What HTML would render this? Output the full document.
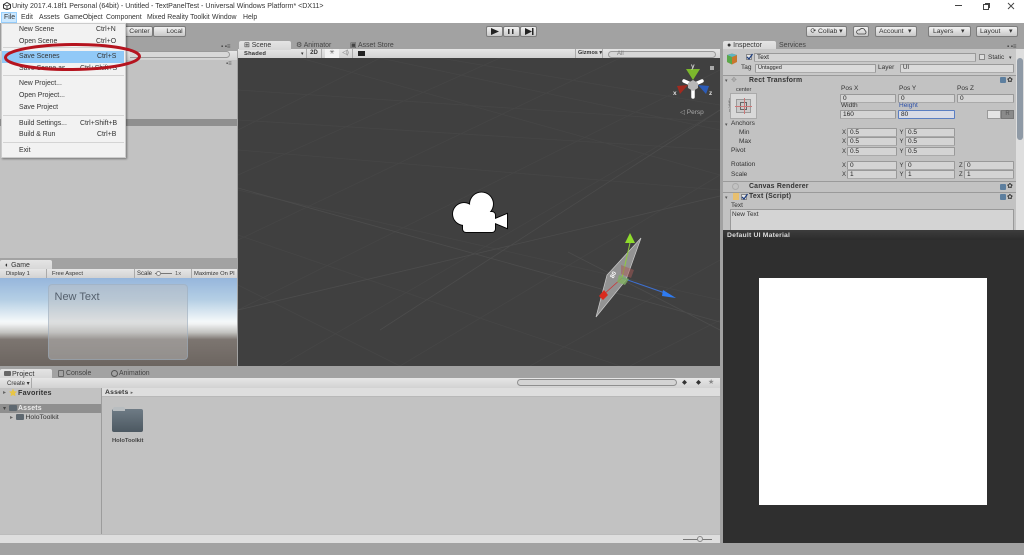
<!DOCTYPE html>
<html><head><meta charset="utf-8"><style>
html,body{margin:0;padding:0;width:1024px;height:555px;overflow:hidden;background:#a2a2a2}
#r{position:relative;width:1024px;height:555px;overflow:hidden;font-family:"Liberation Sans",sans-serif;font-size:6.9px;color:#333;filter:blur(.3px)}
#r div,#r span,#r svg{position:absolute;box-sizing:border-box}
.t{white-space:nowrap;line-height:10px;height:10px;margin-top:.7px}
.b{font-weight:bold;letter-spacing:.2px}
.f{background:#d4d4d4;border:1px solid #999;border-bottom-color:#aaa;border-radius:1px;line-height:7px;padding-left:2px;font-size:6.5px;color:#222;height:9px}
.btn{background:linear-gradient(#f2f2f2,#c8c8c8);border:1px solid #7c7c7c;border-radius:2px;height:11px;top:26px;line-height:9px;text-align:center;color:#333;font-size:6.8px;white-space:nowrap}
.tb{background:linear-gradient(#e6e6e6,#d2d2d2)}
.sep{background:#d4d4d4;height:1px;left:3px;width:121px}
.tab{background:linear-gradient(#e4e4e4,#d6d6d6);border-radius:2px 2px 0 0}
.ic{background:#5d7f9f;width:6px;height:6px;border-radius:1px}
</style></head><body><div id="r">
<!-- title / menu -->
<div style="left:0;top:0;width:1024px;height:23px;background:#fff"></div>
<svg style="left:3px;top:2px" width="8" height="8" viewBox="0 0 8 8"><path d="M4 .5 7.500 2.500V6L4 7.700.5 6V2.500Z" fill="none" stroke="#333" stroke-width="1"/><path d="M4 4V7.500M4 4 .8 2.500M4 4 7.200 2.500" stroke="#333" stroke-width=".8"/></svg>
<span class="t" style="left:12px;top:1px;color:#333;font-size:7.05px">Unity 2017.4.18f1 Personal (64bit) - Untitled - TextPanelTest - Universal Windows Platform* &lt;DX11&gt;</span>
<div style="left:955px;top:5px;width:7px;height:1px;background:#444"></div>
<div style="left:983px;top:4px;width:6px;height:6px;border:1px solid #444;background:#fff"></div>
<div style="left:985px;top:3px;width:5px;height:5px;border-top:1px solid #444;border-right:1px solid #444"></div>
<svg style="left:1007px;top:2px" width="8" height="8"><path d="M1 1 7 7M7 1 1 7" stroke="#444" stroke-width=".9"/></svg>
<div style="left:1px;top:12px;width:16px;height:11px;background:#cce8ff;border:1px solid #99d1ff"></div>
<span class="t" style="left:4px;top:12px">File</span>
<span class="t" style="left:21px;top:12px">Edit</span>
<span class="t" style="left:39px;top:12px">Assets</span>
<span class="t" style="left:64px;top:12px">GameObject</span>
<span class="t" style="left:106px;top:12px">Component</span>
<span class="t" style="left:147px;top:12px">Mixed Reality Toolkit</span>
<span class="t" style="left:212px;top:12px">Window</span>
<span class="t" style="left:243px;top:12px">Help</span>

<!-- toolbar -->
<div style="left:0;top:23px;width:1024px;height:532px;background:#a2a2a2"></div>
<div class="btn" style="left:112px;width:41px;padding-left:14px">Center</div>
<div class="btn" style="left:153px;width:33px;padding-left:10px">Local</div>
<div class="btn" style="left:486px;width:17px"></div><div class="btn" style="left:503px;width:17px"></div><div class="btn" style="left:520px;width:17px"></div>
<svg style="left:486px;top:26px" width="52" height="11"><path d="M5 2 13 5.500 5 9Z" fill="#222"/><path d="M22 3h1.500v5H22ZM26 3h1.500v5H26Z" fill="#333"/><path d="M39 2 46 5.500 39 9Z M46 2h1.500v7H46Z" fill="#222"/></svg>
<div class="btn" style="left:806px;width:41px">⟳ Collab ▾</div>
<div class="btn" style="left:853px;width:16px"></div>
<svg style="left:856px;top:28px" width="11" height="7"><path d="M2 6h7a2 2 0 0 0 0-3.500A3 3 0 0 0 3.500 2 2 2 0 0 0 2 6Z" fill="none" stroke="#444" stroke-width=".8"/></svg>
<div class="btn" style="left:875px;width:42px;text-align:left;padding-left:3px">Account<span style="left:32px;top:0">▾</span></div>
<div class="btn" style="left:928px;width:43px;text-align:left;padding-left:4px">Layers<span style="left:32px;top:0">▾</span></div>
<div class="btn" style="left:976px;width:42px;text-align:left;padding-left:3px">Layout<span style="left:32px;top:0">▾</span></div>

<!-- Hierarchy -->
<div class="tb" style="left:0;top:51px;width:237px;height:9px"></div>
<div style="left:130px;top:51px;width:100px;height:7px;border:1px solid #999;border-left:0;border-radius:0 4px 4px 0;background:#d8d8d8"></div>
<div style="left:0;top:60px;width:237px;height:198px;background:#c2c2c2"></div>
<div style="left:0;top:119px;width:237px;height:7px;background:#8f8f8f"></div>
<span class="t" style="left:226px;top:58px;font-size:6px;color:#555">▪≡</span>
<span class="t" style="left:221px;top:41px;font-size:6px;color:#444">▪ ▪≡</span>

<!-- Scene -->
<div class="tb" style="left:238px;top:49px;width:482px;height:9px"></div>
<div class="tab" style="left:239px;top:41px;width:52px;height:9px"></div>
<span class="t" style="left:244px;top:40.500px">⊞ Scene</span>
<span class="t" style="left:296px;top:40.500px;color:#444">⚙ Animator</span>
<span class="t" style="left:350px;top:40.500px;color:#444">▣ Asset Store</span>
<span class="t b" style="left:244px;top:48.500px;font-size:5.800px">Shaded</span>
<span class="t" style="left:301px;top:48.500px;font-size:5px">▾</span>
<div style="left:306px;top:49px;width:16px;height:9px;text-align:center;line-height:9px;font-size:6px;font-weight:bold;border-left:1px solid #aaa;border-right:1px solid #aaa">2D</div>
<div style="left:325px;top:49px;width:14px;height:9px;background:#f2f2f2;text-align:center;line-height:9px;font-size:6px;color:#555">✳</div>
<div style="left:339px;top:49px;width:14px;height:9px;border-right:1px solid #aaa;text-align:center;line-height:9px;font-size:6px;color:#666">◁)</div>
<div style="left:358px;top:51px;width:7px;height:5px;background:#222"></div>
<div style="left:575px;top:49px;width:28px;height:9px;font-weight:bold;font-size:5.500px;line-height:9px;padding-left:2px;border-left:1px solid #aaa;border-right:1px solid #aaa;white-space:nowrap;overflow:hidden">Gizmos ▾</div>
<div style="left:608px;top:50.500px;width:108px;height:7px;border:1px solid #999;border-radius:4px;background:#d6d6d6;font-size:6px;line-height:5px;padding-left:8px;color:#777">All</div>
<div style="left:238px;top:58px;width:482px;height:308px;background:#404040"></div>
<svg style="left:238px;top:58px" width="482" height="308" viewBox="238 58 482 308">
<g stroke="#464646" stroke-width=".8" fill="none">
<path d="M238 120 720 150M238 150 720 190M238 190 720 300M238 235 620 366M238 285 400 366M380 58 720 130M440 58 720 105M300 58 720 175M238 90 720 122"/>
<path d="M238 175 500 58M238 240 620 58M238 310 720 70M280 366 720 110M400 366 720 175M530 366 720 260M238 130 380 58M630 366 720 320"/>
<path stroke="#4c4c4c" d="M238 188 720 322M238 310 720 196M568 252 720 330M380 330 720 110"/>
</g>
<!-- camera -->
<g fill="#000" stroke="#000" stroke-width="1.800">
<circle cx="464" cy="214" r="11"/><circle cx="481.500" cy="204" r="11.500"/><rect x="463" y="212" width="32" height="20" rx="3"/><path d="M495 219 507 214V228L495 223Z"/>
</g>
<g fill="#fff">
<circle cx="464" cy="214" r="11"/><circle cx="481.500" cy="204" r="11.500"/><rect x="463" y="212" width="32" height="20" rx="3"/><path d="M495 219 507 214V228L495 223Z"/>
</g>
<!-- object -->
<path d="M641 238 607 275 596 317 626 280Z" fill="#a8a8a8" fill-opacity=".8" stroke="#ccc" stroke-width=".7"/>
<path d="M630 243 622 278" stroke="#8ecb3c" stroke-width="1"/>
<path d="M622 278 665 293" stroke="#3d6fd0" stroke-width="1"/>
<path d="M622 278 603 295" stroke="#c33" stroke-width=".8"/>
<path d="M630 233 635 243 625 243Z" fill="#8fdc2c"/>
<path d="M676 298 663 290 662 296Z" fill="#2f7bf0"/>
<path d="M599 296 604 290 608 295 603 300Z" fill="#d92a1d"/>
<path d="M619 275 629 279 625 285 617 282Z" fill="#7fb060" fill-opacity=".8"/>
<path d="M621 265 634 270 631 278 621 274Z" fill="#a85a55" fill-opacity=".5"/>
<text x="610" y="277" font-size="6" fill="#fff" font-weight="bold" transform="rotate(-65 613 275)">80</text>
<!-- gizmo -->
<g stroke="#fff" stroke-width="3.500" stroke-linecap="round"><path d="M693 85 684 81M693 85 702 81M693 85V97"/></g>
<path d="M693 80 686 69H700Z" fill="#7cb82c"/>
<path d="M688 85 677 86 680 94Z" fill="#a12a1f"/>
<path d="M698 85 709 86 706 94Z" fill="#2c5cb8"/>
<path d="M693 80 698 83V88L693 91 688 88V83Z" fill="#b8b8b8"/>
<text x="691" y="68" font-size="6.500" font-weight="bold" fill="#ddd" font-family="Liberation Sans">y</text>
<text x="673" y="95" font-size="6.500" font-weight="bold" fill="#ddd" font-family="Liberation Sans">x</text>
<text x="709" y="95" font-size="6.500" font-weight="bold" fill="#ddd" font-family="Liberation Sans">z</text>
<text x="680" y="114" font-size="6.500" fill="#a8a8a8" font-family="Liberation Sans">◁ Persp</text>
<path d="M710 66h4v4h-4Z" fill="#aaa"/>
</svg>

<!-- Game -->
<div class="tab" style="left:0;top:260px;width:52px;height:10px"></div>
<span class="t" style="left:5px;top:260px">◐ Game</span>
<div class="tb" style="left:0;top:269px;width:237px;height:9px"></div>
<span class="t" style="left:6px;top:268.500px;font-size:5.800px">Display 1</span>
<span class="t" style="left:52px;top:268.500px;font-size:5.800px">Free Aspect</span>
<span class="t" style="left:137px;top:268.500px;font-size:6px">Scale <span style="left:18px;top:4px;width:17px;height:1px;background:#777"></span></span>
<div style="left:156px;top:271px;width:5px;height:5px;border-radius:50%;border:1px solid #888;background:#eee"></div>
<span class="t" style="left:175px;top:268.500px;font-size:5.800px;color:#555">1x</span>
<span class="t" style="left:194px;top:268.500px;font-size:5.800px;width:43px;overflow:hidden">Maximize On Pl</span>
<div style="left:46px;top:269px;width:1px;height:9px;background:#aaa"></div><div style="left:134px;top:269px;width:1px;height:9px;background:#aaa"></div><div style="left:191px;top:269px;width:1px;height:9px;background:#aaa"></div>
<div style="left:0;top:278px;width:237px;height:88px;background:linear-gradient(#96b6dc 0,#b5cfe5 25%,#f4f8fa 49%,#f2f4f4 52%,#c2c2bf 62%,#7c7570 70%,#6c6560 100%)"></div>
<div style="left:48px;top:284px;width:140px;height:76px;background:rgba(190,190,190,.45);border:1px solid rgba(150,170,190,.5);border-radius:4px"></div>
<span class="t" style="left:54.500px;top:291px;font-size:11px;color:#55606d">New Text</span>

<!-- Project -->
<div class="tab" style="left:0;top:369px;width:52px;height:9px"></div>
<div style="left:4px;top:371px;width:7px;height:5px;background:#666;border-radius:1px"></div>
<span class="t" style="left:12px;top:368.500px;font-size:7.200px">Project</span>
<div style="left:58px;top:370px;width:6px;height:7px;border:1px solid #666;border-radius:1px"></div>
<span class="t" style="left:66px;top:368.500px;color:#444">Console</span>
<div style="left:111px;top:370px;width:7px;height:7px;border:1px solid #555;border-radius:50%"></div>
<span class="t" style="left:119px;top:368.500px;color:#444">Animation</span>
<div class="tb" style="left:0;top:378px;width:720px;height:10px"></div>
<span class="t" style="left:7px;top:378px;font-size:6px">Create ▾</span>
<div style="left:31px;top:378px;width:1px;height:10px;background:#aaa"></div>
<div style="left:517px;top:379px;width:160px;height:7px;border:1px solid #8f8f8f;border-radius:4px;background:#d4d4d4"></div>
<span class="t" style="left:682px;top:377.500px;font-size:6.500px;color:#333">◆</span>
<span class="t" style="left:696px;top:377.500px;font-size:6.500px;color:#333">◆</span>
<span class="t" style="left:708px;top:377.500px;font-size:7px;color:#888">★</span>
<div style="left:0;top:388px;width:101px;height:155px;background:#c2c2c2"></div>
<div style="left:101px;top:388px;width:1px;height:155px;background:#9c9c9c"></div>
<div style="left:102px;top:388px;width:618px;height:155px;background:#c2c2c2"></div>
<div style="left:102px;top:388px;width:618px;height:9px;background:#dedede;border-bottom:1px solid #b8b8b8"></div>
<span class="t b" style="left:105px;top:387.500px;font-size:6.800px">Assets <span style="position:static;font-weight:normal;font-size:5px;color:#666">▸</span></span>
<span class="t" style="left:3px;top:387px;font-size:6px;color:#666">▸</span>
<svg style="left:9px;top:388px" width="8" height="9"><path d="M4 .5 5.200 3.300 8 3.600 6 5.500 6.500 8.300 4 7 1.500 8.300 2 5.500 0 3.600 2.800 3.300Z" fill="#e8c545"/></svg>
<span class="t b" style="left:18px;top:387px;font-size:7.200px">Favorites</span>
<div style="left:0;top:404px;width:101px;height:8.500px;background:#8f8f8f"></div>
<span class="t" style="left:3px;top:403px;font-size:6px;color:#444">▾</span>
<div style="left:9px;top:405px;width:8px;height:6px;background:#5e6870;border-radius:1px"></div>
<span class="t b" style="left:18px;top:403px;color:#eee">Assets</span>
<span class="t" style="left:10px;top:412px;font-size:6px;color:#666">▸</span>
<div style="left:16px;top:414px;width:8px;height:6px;background:#5e6870;border-radius:1px"></div>
<span class="t" style="left:25.500px;top:412px;font-size:6.800px">HoloToolkit</span>
<div style="left:112px;top:409px;width:31px;height:23px;border-radius:2px;background:linear-gradient(#6e7b85,#4c5861)"></div>
<div style="left:113px;top:407px;width:12px;height:4px;border-radius:2px 2px 0 0;background:#b8bdc0"></div>
<span class="t" style="left:112px;top:435.500px;font-size:5.800px;color:#444;font-weight:bold">HoloToolkit</span>
<div style="left:0;top:534px;width:720px;height:9px;background:#dedede;border-top:1px solid #bcbcbc"></div>
<div style="left:683px;top:538.500px;width:29px;height:1px;background:#777"></div>
<div style="left:697px;top:536px;width:6px;height:6px;border-radius:50%;background:#ddd;border:1px solid #888"></div>

<!-- Inspector -->
<div style="left:723px;top:49px;width:301px;height:181px;background:#c2c2c2"></div>
<div class="tab" style="left:723px;top:41px;width:53px;height:9px"></div>
<span class="t" style="left:727px;top:40.500px;font-size:7px">● Inspector</span>
<span class="t" style="left:779px;top:40.500px;color:#444;font-size:7px">Services</span>
<span class="t" style="left:1007px;top:41px;font-size:6px;color:#444">▪ ▪≡</span>
<div style="left:723px;top:49px;width:293px;height:26px;background:#c8c8c8"></div>
<svg style="left:726px;top:53px" width="12" height="12"><path d="M1 2 6 .5 11 2V9L6 11.500 1 9Z" fill="#c9762d"/><path d="M1 2 6 .5 11 2 6 4Z" fill="#5bb6c4"/><path d="M1 2 6 4V11.500L1 9Z" fill="#5aa84a"/></svg>
<div style="left:746px;top:54px;width:6px;height:6px;background:#e8e8e8;border:1px solid #888"></div>
<svg style="left:746px;top:53px" width="7" height="7"><path d="M1 4 3 6 6.500 1" fill="none" stroke="#1f3f7f" stroke-width="1.300"/></svg>
<div class="f" style="left:754px;top:53px;width:222px">Text</div>
<div style="left:979px;top:54px;width:6px;height:6px;background:#ddd;border:1px solid #888"></div>
<span class="t" style="left:988px;top:52px;font-size:6.500px">Static</span><span class="t" style="left:1009px;top:52px;font-size:5px">▾</span>
<span class="t" style="left:741px;top:62px;font-size:6.500px">Tag</span>
<div class="f" style="left:755px;top:63.500px;width:121px;background:#dadada;font-size:5.500px">Untagged</div>
<span class="t" style="left:878px;top:62px;font-size:6.500px">Layer</span>
<div class="f" style="left:900px;top:63.500px;width:114px;background:#dadada;font-size:6px">UI</div>
<div style="left:723px;top:75px;width:293px;height:1px;background:#9a9a9a"></div>
<span class="t" style="left:725px;top:75px;font-size:5px;color:#555">▾</span>
<span class="t" style="left:731px;top:75px;font-size:7px;color:#999">✥</span>
<span class="t b" style="left:749px;top:75px">Rect Transform</span>
<div class="ic" style="left:1000px;top:77px"></div><span class="t" style="left:1007px;top:75px;font-size:7px">✿</span>
<span class="t" style="left:736px;top:84px;font-size:5.500px">center</span>
<span class="t" style="left:723.500px;top:99px;font-size:5px;transform:rotate(-90deg)">middle</span>
<div style="left:730px;top:93px;width:27px;height:26px;background:#d9d9d9;border:1px solid #aaa"></div>
<div style="left:736px;top:99px;width:15px;height:14px;background:#cacaca;border:1px solid #9a9a9a"></div>
<div style="left:740px;top:102px;width:7px;height:8px;border:1px solid #666"></div>
<div style="left:735px;top:106px;width:17px;height:1px;background:#c77"></div>
<div style="left:743.500px;top:98px;width:1px;height:16px;background:#c77"></div>
<span class="t" style="left:841px;top:83.500px;font-size:6.500px">Pos X</span><span class="t" style="left:899px;top:83.500px;font-size:6.500px">Pos Y</span><span class="t" style="left:957px;top:83.500px;font-size:6.500px">Pos Z</span>
<div class="f" style="left:840px;top:94px;width:56px">0</div><div class="f" style="left:898px;top:94px;width:57px">0</div><div class="f" style="left:957px;top:94px;width:57px">0</div>
<span class="t" style="left:841px;top:100.500px;font-size:6.500px">Width</span><span class="t" style="left:899px;top:100.500px;font-size:6.500px;color:#2b4fa8">Height</span>
<div class="f" style="left:840px;top:110px;width:56px">160</div>
<div class="f" style="left:898px;top:110px;width:57px;border-color:#5a7ec2;background:#d8dbe6">80</div>
<div style="left:987px;top:110px;width:14px;height:9px;background:#e4e4e4;border:1px solid #999"></div>
<div style="left:1001px;top:110px;width:13px;height:9px;background:#8a8a8a;border:1px solid #777;text-align:center;color:#555;font-size:6px;line-height:7px">R</div>
<span class="t" style="left:725px;top:119px;font-size:5px;color:#555">▾</span>
<span class="t" style="left:731px;top:118.500px;font-size:6.500px">Anchors</span>
<span class="t" style="left:739px;top:127.500px;font-size:6.500px">Min</span>
<span class="t" style="left:739px;top:136px;font-size:6.500px">Max</span>
<span class="t" style="left:731px;top:145.500px;font-size:6.500px">Pivot</span>
<span class="t" style="left:731px;top:159.500px;font-size:6.500px">Rotation</span>
<span class="t" style="left:731px;top:169px;font-size:6.500px">Scale</span>
<span class="t" style="left:842px;top:127.500px;font-size:6px">X</span><div class="f" style="left:847px;top:128px;width:50px">0.5</div><span class="t" style="left:899.500px;top:127.500px;font-size:6px">Y</span><div class="f" style="left:905px;top:128px;width:50px">0.5</div>
<span class="t" style="left:842px;top:136px;font-size:6px">X</span><div class="f" style="left:847px;top:137px;width:50px">0.5</div><span class="t" style="left:899.500px;top:136px;font-size:6px">Y</span><div class="f" style="left:905px;top:137px;width:50px">0.5</div>
<span class="t" style="left:842px;top:146px;font-size:6px">X</span><div class="f" style="left:847px;top:147px;width:50px">0.5</div><span class="t" style="left:899.500px;top:146px;font-size:6px">Y</span><div class="f" style="left:905px;top:147px;width:50px">0.5</div>
<span class="t" style="left:842px;top:160px;font-size:6px">X</span><div class="f" style="left:847px;top:160.500px;width:50px">0</div><span class="t" style="left:899.500px;top:160px;font-size:6px">Y</span><div class="f" style="left:905px;top:160.500px;width:50px">0</div><span class="t" style="left:959px;top:160px;font-size:6px">Z</span><div class="f" style="left:964px;top:160.500px;width:50px">0</div>
<span class="t" style="left:842px;top:169.500px;font-size:6px">X</span><div class="f" style="left:847px;top:170px;width:50px">1</div><span class="t" style="left:899.500px;top:169.500px;font-size:6px">Y</span><div class="f" style="left:905px;top:170px;width:50px">1</div><span class="t" style="left:959px;top:169.500px;font-size:6px">Z</span><div class="f" style="left:964px;top:170px;width:50px">1</div>
<div style="left:723px;top:181px;width:293px;height:1px;background:#9a9a9a"></div>
<div style="left:732px;top:183px;width:7px;height:7px;border:1px solid #aaa;border-radius:50%"></div>
<span class="t b" style="left:749px;top:181px">Canvas Renderer</span>
<div class="ic" style="left:1000px;top:184px"></div><span class="t" style="left:1007px;top:181.500px;font-size:7px">✿</span>
<div style="left:723px;top:192px;width:293px;height:1px;background:#9a9a9a"></div>
<span class="t" style="left:725px;top:192px;font-size:5px;color:#555">▾</span>
<div style="left:733px;top:193px;width:6px;height:7px;background:#e8c070"></div>
<div style="left:741px;top:194px;width:6px;height:6px;background:#e8e8e8;border:1px solid #888"></div>
<svg style="left:741px;top:193px" width="7" height="7"><path d="M1 4 3 6 6.500 1" fill="none" stroke="#1f3f7f" stroke-width="1.300"/></svg>
<span class="t b" style="left:749px;top:191.500px">Text (Script)</span>
<div class="ic" style="left:1000px;top:194px"></div><span class="t" style="left:1007px;top:192px;font-size:7px">✿</span>
<span class="t" style="left:731px;top:200px;font-size:6.500px">Text</span>
<div style="left:730px;top:209px;width:284px;height:21px;background:#d4d4d4;border:1px solid #999;border-bottom:0;font-size:6.500px;line-height:9px;padding-left:1px">New Text</div>
<div style="left:1016px;top:49px;width:8px;height:181px;background:#dedede"></div>
<div style="left:1017px;top:58px;width:6px;height:82px;background:#8f9aa6;border-radius:3px"></div>
<div style="left:723px;top:230px;width:301px;height:10px;background:linear-gradient(#3c3c3c,#2c2c2c)"></div>
<span class="t b" style="left:727px;top:230px;color:#ddd;font-size:6.800px">Default UI Material</span>
<div style="left:723px;top:240px;width:301px;height:303px;background:#2f2f2f"></div>
<div style="left:759px;top:278px;width:228px;height:227px;background:#fff"></div>

<!-- File menu -->
<div style="left:1px;top:23px;width:125px;height:135px;background:#f2f2f2;border:1px solid #ccc;box-shadow:1px 1px 2px rgba(0,0,0,.4)"></div>
<div style="left:2px;top:51px;width:122px;height:12px;background:#91c9f7"></div>
<span class="t" style="left:19px;top:24.500px">New Scene</span><span class="t" style="left:96px;top:24.500px">Ctrl+N</span>
<span class="t" style="left:19px;top:36px">Open Scene</span><span class="t" style="left:96px;top:36px">Ctrl+O</span>
<div class="sep" style="top:47px"></div>
<span class="t" style="left:19px;top:51.500px">Save Scenes</span><span class="t" style="left:97px;top:51.500px">Ctrl+S</span>
<span class="t" style="left:19px;top:63.500px">Save Scene as...</span><span class="t" style="left:80px;top:63.500px">Ctrl+Shift+S</span>
<div class="sep" style="top:75px"></div>
<span class="t" style="left:19px;top:78.500px">New Project...</span>
<span class="t" style="left:19px;top:90.500px">Open Project...</span>
<span class="t" style="left:19px;top:102px">Save Project</span>
<div class="sep" style="top:115px"></div>
<span class="t" style="left:19px;top:118px">Build Settings...</span><span class="t" style="left:80px;top:118px">Ctrl+Shift+B</span>
<span class="t" style="left:19px;top:129.500px">Build &amp; Run</span><span class="t" style="left:97px;top:129.500px">Ctrl+B</span>
<div class="sep" style="top:142px"></div>
<span class="t" style="left:19px;top:145px">Exit</span>
<svg style="left:0;top:38px" width="146" height="38"><ellipse cx="72.500" cy="19" rx="67" ry="12.500" fill="none" stroke="#b5141f" stroke-width="3" transform="rotate(-.5 72 19)"/></svg>
</div></body></html>
